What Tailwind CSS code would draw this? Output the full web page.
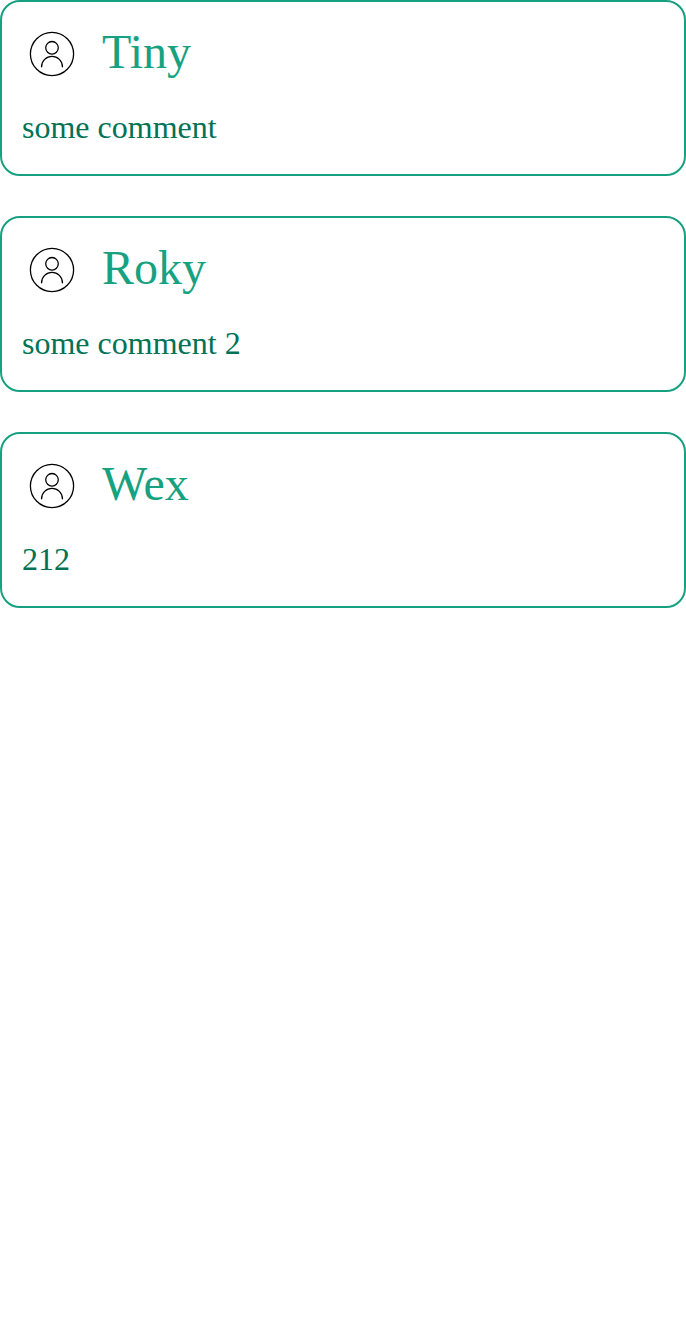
<!DOCTYPE html>
<html lang="en">
<head>
<meta charset="utf-8">
<title>Comments</title>
<script src="https://cdn.jsdelivr.net/npm/@tailwindcss/browser@4"></script>
</head>
<body class="min-h-screen bg-white font-['Liberation_Serif',serif]">
<svg class="hidden"><symbol id="user" viewBox="0 0 60 60"><g fill="none" stroke="#000" stroke-width="1.3"><circle cx="30" cy="30" r="21.6"/><circle cx="30" cy="23.8" r="6.3"/><path stroke-linecap="round" d="M19.6 42.8v-.1a10.4 10.4 0 0 1 20.8 0v.1"/></g></symbol></svg>
<main class="flex flex-col gap-10">
<article class="h-44 rounded-[20px] border-2 border-[#16a280] px-5 pt-5">
<div class="flex h-16 items-center gap-5"><svg class="size-[60px]"><use href="#user"/></svg><h2 class="pb-1 text-5xl text-[#16a280]">Tiny</h2></div>
<p class="mt-[21px] text-[32px] leading-[40px] text-[#007256]">some comment</p>
</article>
<article class="h-44 rounded-[20px] border-2 border-[#16a280] px-5 pt-5">
<div class="flex h-16 items-center gap-5"><svg class="size-[60px]"><use href="#user"/></svg><h2 class="pb-1 text-5xl text-[#16a280]">Roky</h2></div>
<p class="mt-[21px] text-[32px] leading-[40px] text-[#007256]">some comment 2</p>
</article>
<article class="h-44 rounded-[20px] border-2 border-[#16a280] px-5 pt-5">
<div class="flex h-16 items-center gap-5"><svg class="size-[60px]"><use href="#user"/></svg><h2 class="pb-1 text-5xl text-[#16a280]">Wex</h2></div>
<p class="mt-[21px] text-[32px] leading-[40px] text-[#007256]">212</p>
</article>
</main>
</body>
</html>
